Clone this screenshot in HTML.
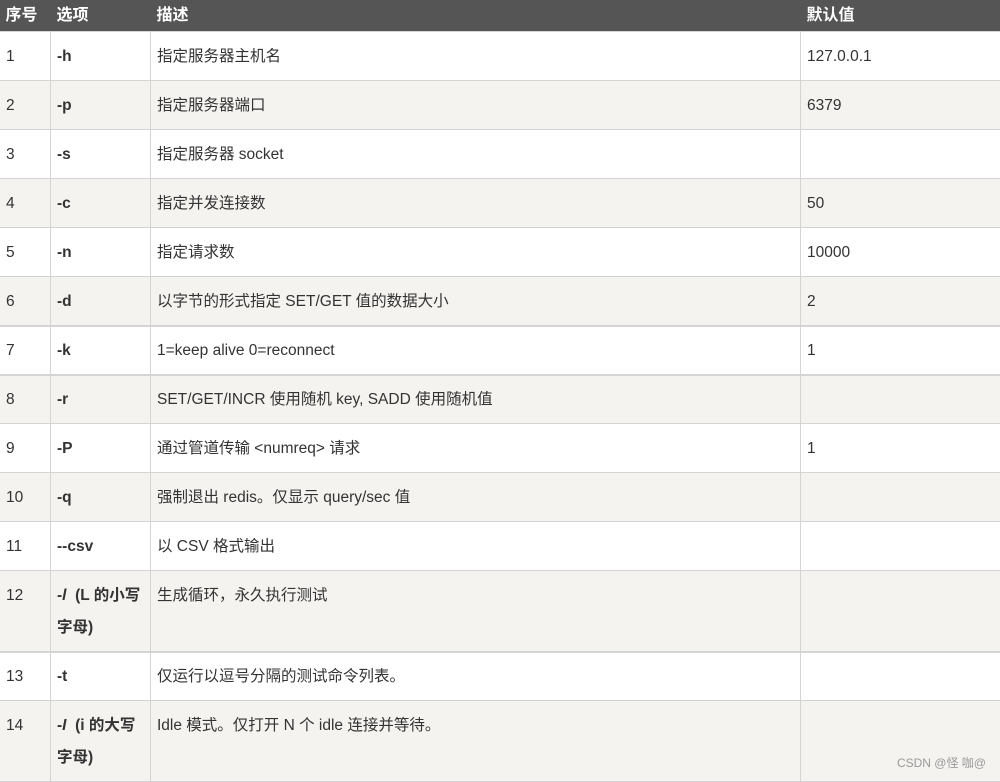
<!DOCTYPE html>
<html><head><meta charset="utf-8"><style>
*{margin:0;padding:0;box-sizing:border-box}
body{width:1000px;height:779px;overflow:hidden;background:#fff;font-family:"Liberation Sans","Noto Sans CJK SC",sans-serif;color:#333;font-size:15.5px;position:relative}
table{border-collapse:collapse;width:1001px;table-layout:fixed;margin-left:-1px}
th{background:#555;color:#fff;font-weight:bold;text-align:left;height:31px;padding:0 6px;font-size:16px;line-height:31px}
td{border:1px solid #d4d4d4;vertical-align:top;padding:9px 6px 7px;line-height:32px;height:49px}
tr.a td{background:#f4f3f0}
td.b{font-weight:bold}
tr.t td{border-top:2px solid #d4d4d4;height:48px;padding-top:8px;padding-bottom:7px}
.wm{position:absolute;right:14px;bottom:8px;color:#999;font-size:12px;font-family:"Liberation Sans","Noto Sans CJK SC",sans-serif}
</style></head><body>
<table>
<colgroup><col style="width:51px"><col style="width:100px"><col style="width:650px"><col style="width:200px"></colgroup>
<tr><th>序号</th><th>选项</th><th>描述</th><th>默认值</th></tr>
<tr><td>1</td><td class="b">-h</td><td>指定服务器主机名</td><td>127.0.0.1</td></tr>
<tr class="a"><td>2</td><td class="b">-p</td><td>指定服务器端口</td><td>6379</td></tr>
<tr><td>3</td><td class="b">-s</td><td>指定服务器 socket</td><td></td></tr>
<tr class="a"><td>4</td><td class="b">-c</td><td>指定并发连接数</td><td>50</td></tr>
<tr><td>5</td><td class="b">-n</td><td>指定请求数</td><td>10000</td></tr>
<tr class="a"><td>6</td><td class="b">-d</td><td>以字节的形式指定 SET/GET 值的数据大小</td><td>2</td></tr>
<tr class="t"><td>7</td><td class="b">-k</td><td>1=keep alive 0=reconnect</td><td>1</td></tr>
<tr class="a t"><td>8</td><td class="b">-r</td><td>SET/GET/INCR 使用随机 key, SADD 使用随机值</td><td></td></tr>
<tr><td>9</td><td class="b">-P</td><td>通过管道传输 &lt;numreq&gt; 请求</td><td>1</td></tr>
<tr class="a"><td>10</td><td class="b">-q</td><td>强制退出 redis。仅显示 query/sec 值</td><td></td></tr>
<tr><td>11</td><td class="b">--csv</td><td>以 CSV 格式输出</td><td></td></tr>
<tr class="a"><td style="height:81px">12</td><td class="b">-<i>l</i> &nbsp;(L 的小写字母)</td><td>生成循环，永久执行测试</td><td></td></tr>
<tr class="t"><td>13</td><td class="b">-t</td><td>仅运行以逗号分隔的测试命令列表。</td><td></td></tr>
<tr class="a"><td style="height:81px">14</td><td class="b">-<i>I</i> &nbsp;(i 的大写字母)</td><td>Idle 模式。仅打开 N 个 idle 连接并等待。</td><td></td></tr>
</table>
<div class="wm">CSDN @怪 咖@</div>
</body></html>
